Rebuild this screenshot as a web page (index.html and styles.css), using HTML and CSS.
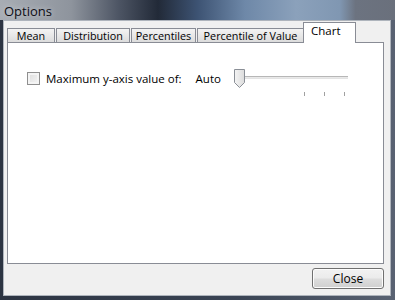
FILE: index.html
```html
<!DOCTYPE html>
<html>
<head>
<meta charset="utf-8">
<link rel="stylesheet" href="styles.css">
</head>
<body>
<div class="window">
  <div class="titlebar"><span class="title">Options</span></div>
  <div class="client">
    <div class="tabs">
      <div class="tab t1">Mean</div>
      <div class="tab t2">Distribution</div>
      <div class="tab t3">Percentiles</div>
      <div class="tab t4">Percentile of Value</div>
      <div class="tab active">Chart</div>
    </div>
    <div class="panel">
      <div class="row">
        <span class="checkbox"></span>
        <span class="label">Maximum y-axis value of:</span>
        <span class="auto">Auto</span>
        <div class="slider">
          <div class="track"></div>
          <svg class="thumb" width="11" height="19" viewBox="0 0 11 19">
            <defs>
              <linearGradient id="tg" x1="0" y1="0" x2="1" y2="0">
                <stop offset="0" stop-color="#f4f4f4"/>
                <stop offset="1" stop-color="#dcdcdc"/>
              </linearGradient>
            </defs>
            <path d="M0.5 0.5 H10.5 V13.5 L5.5 18.5 L0.5 13.5 Z" fill="url(#tg)" stroke="#8a8f96"/>
          </svg>
          <div class="ticks">
            <span class="tick"></span>
            <span class="tick"></span>
            <span class="tick"></span>
          </div>
        </div>
      </div>
    </div>
    <div class="footer">
      <button class="btn">Close</button>
    </div>
  </div>
</div>
</body>
</html>
```
FILE: styles.css
```css
* { box-sizing: border-box; }
html, body { margin: 0; padding: 0; }
body {
  width: 395px;
  height: 300px;
  overflow: hidden;
  font-family: "Open Sans", "Noto Sans", "Liberation Sans", sans-serif;
  font-size: 11.5px;
  color: #000;
}
.window {
  width: 395px;
  height: 300px;
  display: flex;
  flex-direction: column;
  background: linear-gradient(90deg, #2c3442 0%, #3a4454 60%, #596272 100%);
  padding: 0 4px 4px 3px;
}
.titlebar {
  height: 20px;
  margin: 0 -4px 0 -3px;
  padding-left: 4px;
  display: flex;
  align-items: center;
  background: linear-gradient(90deg, #a8adb4 0%, #8e949d 18%, #4d5564 30%, #222a38 40%, #3d5373 50%, #6e88a8 62%, #8ba1bb 75%, #8097b2 86%, #6c7380 90%, #6a707c 100%);
}
.title {
  font-size: 13px;
  color: #0c0c14;
  text-shadow: 0 0 6px rgba(255,255,255,0.6);
  margin-top: 1px;
}
.client {
  flex: 1;
  background: #f0f0f0;
  border: 1px solid #aeb4bc;
  display: flex;
  flex-direction: column;
  padding: 1px 6px 0 3px;
}
.tabs {
  display: flex;
  align-items: flex-end;
  height: 20px;
  position: relative;
  z-index: 1;
}
.tab {
  height: 14px;
  border: 1px solid #898c95;
  border-bottom: none;
  margin-right: 1px;
  background: linear-gradient(#f3f3f3, #e8e8e8 50%, #dcdcdc);
  white-space: nowrap;
  text-align: center;
  font-size: 10.8px;
  line-height: 14px;
  padding-top: 0;
}
.t1 { width: 48px; }
.t2 { width: 74px; }
.t3 { width: 65px; }
.t4 { width: 107px; }
.tab.active {
  width: 53px;
  height: 21px;
  margin-left: -2px;
  margin-bottom: -1px;
  background: #fff;
  font-size: 11.5px;
  line-height: 14px;
  padding-top: 1px;
  text-align: left;
  padding-left: 7px;
}
.panel {
  height: 222px;
  background: #fff;
  border: 1px solid #898c95;
  padding: 28px 0 0 19px;
}
.row {
  display: flex;
  align-items: flex-start;
}
.checkbox {
  width: 13px;
  height: 13px;
  border: 1px solid #8f8f8f;
  background: linear-gradient(135deg, #dcdcdc, #f6f6f6);
  box-shadow: inset 0 0 0 2px #f4f4f4;
  margin-top: 1px;
}
.label {
  margin-left: 6px;
  line-height: 16px;
}
.auto {
  margin-left: 14px;
  line-height: 16px;
}
.slider {
  position: relative;
  width: 114px;
  height: 30px;
  margin-left: 13px;
  margin-top: -2px;
}
.track {
  position: absolute;
  left: 4px;
  right: 0;
  top: 7px;
  height: 3px;
  border-top: 1px solid #b7b7b7;
  border-bottom: 1px solid #e3e3e3;
  background: #e9e9e9;
}
.thumb {
  position: absolute;
  left: 0;
  top: 0;
}
.ticks {
  position: absolute;
  top: 23px;
  left: 0;
  right: 0;
}
.tick {
  position: absolute;
  width: 1px;
  height: 4px;
  background: #a0a0a0;
}
.tick:nth-child(1) { left: 70px; }
.tick:nth-child(2) { left: 90px; }
.tick:nth-child(3) { left: 110px; }
.footer {
  display: flex;
  justify-content: flex-end;
  padding-top: 4px;
}
.btn {
  width: 72px;
  height: 21px;
  font-family: inherit;
  font-size: 12px;
  color: #000;
  border: 1px solid #707070;
  border-radius: 3px;
  background: linear-gradient(#f2f2f2 0%, #ebebeb 48%, #dddddd 52%, #cfcfcf 100%);
  box-shadow: inset 0 0 0 1px #fcfcfc;
  padding: 0;
}
```
